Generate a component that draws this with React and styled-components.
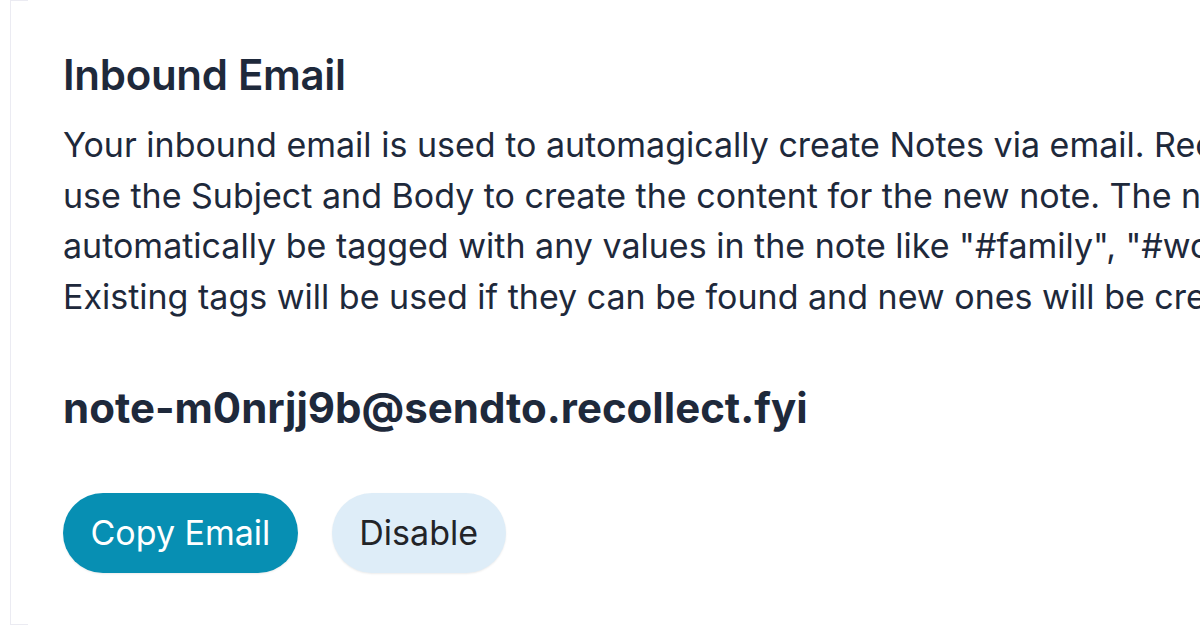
import React from "react"
import styled, { createGlobalStyle } from "styled-components"

const GlobalStyle = createGlobalStyle`
  html, body {
    margin: 0;
    padding: 0;
    background: #ffffff;
    overflow: hidden;
  }
  body {
    width: 1200px;
    height: 630px;
    font-family: Inter, "Noto Sans", sans-serif;
  }
`

const App = () => {
  return (
    <>
      <GlobalStyle />
      <Page>
        <Card>
          <Title>Inbound Email</Title>
          <Desc>
            Your inbound email is used to automagically create Notes via email. Recollect will<br />
            use the Subject and Body to create the content for the new note. The note will<br />
            automatically be tagged with any values in the note like "#family", "#work".<br />
            Existing tags will be used if they can be found and new ones will be created.
          </Desc>
          <Address>note-m0nrjj9b@sendto.recollect.fyi</Address>
          <Actions>
            <Button primary>Copy Email</Button>
            <Button>Disable</Button>
          </Actions>
        </Card>
      </Page>
    </>
  )
}

const Page = styled.div`
  width: 1200px;
  height: 630px;
  padding-left: 10px;
  box-sizing: border-box;
  overflow: hidden;
`

const Card = styled.section`
  position: relative;
  height: 625px;
  border-left: 1.5px solid #ebebf2;
  padding: 50px 0 0 52px;
  box-sizing: border-box;
  white-space: nowrap;

  &::before,
  &::after {
    content: "";
    position: absolute;
    left: 0;
    width: 17px;
    border-top: 1.5px solid #ebebf2;
  }
  &::before { top: 0; }
  &::after { bottom: 0; }
`

const Title = styled.h2`
  margin: 0;
  font-size: 42px;
  line-height: 50px;
  font-weight: 600;
  color: #1e293b;
  letter-spacing: -0.3px;
`

const Desc = styled.p`
  margin: 20px 0 0;
  font-size: 34px;
  line-height: 50.7px;
  font-weight: 400;
  color: #1e293b;
`

const Address = styled.div`
  margin-top: 60px;
  font-size: 42px;
  line-height: 50px;
  font-weight: 700;
  color: #1e293b;
`

const Actions = styled.div`
  display: flex;
  gap: 34px;
  margin-top: 60px;
`

const Button = styled.button`
  height: 80px;
  padding: 0 27.5px;
  border-radius: 40px;
  border: none;
  font-family: Inter, "Noto Sans", sans-serif;
  font-size: 34px;
  font-weight: 400;
  cursor: pointer;
  background: ${p => (p.primary ? "#078fb3" : "#deedf8")};
  color: ${p => (p.primary ? "#ffffff" : "#222428")};
  box-shadow: 0 1px 2px rgba(0, 0, 0, 0.08);
`

export default App
